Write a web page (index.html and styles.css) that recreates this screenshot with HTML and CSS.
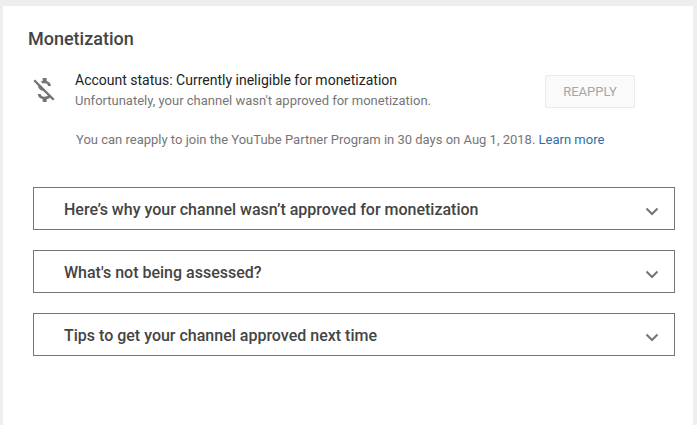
FILE: index.html
```html
<!DOCTYPE html>
<html lang="en">
<head>
  <meta charset="UTF-8" />
  <meta name="viewport" content="width=device-width, initial-scale=1.0" />
  <title>Monetization</title>
  <link rel="stylesheet" href="styles.css">
</head>
<body>
  <div class="card">
    <h2 class="title">Monetization</h2>
    <div class="status">
      <svg class="status-icon" viewBox="0 0 24 24" width="32" height="32">
        <path d="M12.5 6.9c1.78 0 2.44.85 2.5 2.1h2.21c-.07-1.72-1.12-3.3-3.21-3.81V3h-3v2.16c-.53.12-1.03.3-1.48.54l1.47 1.47c.41-.17.91-.27 1.51-.27zM5.33 4.06L4.06 5.33 7.5 8.77c0 2.08 1.56 3.21 3.91 3.91l3.51 3.51c-.34.48-1.05.91-2.42.91-2.06 0-2.87-.92-2.98-2.1h-2.2c.12 2.19 1.76 3.42 3.68 3.83V21h3v-2.15c.96-.18 1.82-.55 2.45-1.12l2.22 2.22 1.27-1.27L5.33 4.06z"/>
      </svg>
      <div class="status-text">
        <div class="status-main">Account status: Currently ineligible for monetization</div>
        <div class="status-sub">Unfortunately, your channel wasn't approved for monetization.</div>
      </div>
      <button class="reapply" disabled>REAPPLY</button>
    </div>
    <p class="note">You can reapply to join the YouTube Partner Program in 30 days on Aug 1, 2018. <a href="#">Learn more</a></p>
    <div class="panels">
      <div class="panel">
        <span>Here’s why your channel wasn’t approved for monetization</span>
        <svg class="chevron" viewBox="0 0 14 9" width="14" height="9"><path d="M1.5 1.5 7 7l5.5-5.5"/></svg>
      </div>
      <div class="panel">
        <span>What's not being assessed?</span>
        <svg class="chevron" viewBox="0 0 14 9" width="14" height="9"><path d="M1.5 1.5 7 7l5.5-5.5"/></svg>
      </div>
      <div class="panel">
        <span>Tips to get your channel approved next time</span>
        <svg class="chevron" viewBox="0 0 14 9" width="14" height="9"><path d="M1.5 1.5 7 7l5.5-5.5"/></svg>
      </div>
    </div>
  </div>
</body>
</html>
```

FILE: styles.css
```css
html, body {
  height: 100%;
}
body {
  margin: 0;
  padding: 6px 4px 0 3px;
  box-sizing: border-box;
  font-family: Roboto, sans-serif;
  background: #eeeeee;
  overflow: hidden;
}
.card {
  background: #fff;
  height: 100%;
  padding: 22px 18px 0 25px;
  box-sizing: border-box;
}
.title {
  margin: 0;
  font-size: 18px;
  line-height: 22px;
  font-weight: 500;
  color: #444;
}
.status {
  display: flex;
  align-items: flex-start;
  margin-top: 19px;
}
.status-icon {
  flex: none;
  margin-top: 5px;
  fill: #757575;
}
.status-text {
  flex: 1;
  margin: 1px 0 0 15px;
}
.status-main {
  font-size: 14px;
  line-height: 20px;
  color: #222;
}
.status-sub {
  font-size: 13px;
  line-height: 21px;
  color: #767676;
}
.reapply {
  flex: none;
  width: 90px;
  height: 33px;
  margin: 6px 40px 0 0;
  padding: 0;
  background: #fafafa;
  border: 1px solid #eaeaea;
  border-radius: 2px;
  font-family: inherit;
  font-size: 13px;
  color: #a6a6a6;
}
.note {
  margin: 19px 0 0 48px;
  font-size: 13px;
  line-height: 20px;
  color: #767676;
}
.note a {
  color: #2f6ea5;
  text-decoration: none;
}
.panels {
  display: flex;
  flex-direction: column;
  gap: 20px;
  margin: 37px 0 0 5px;
}
.panel {
  display: flex;
  align-items: center;
  justify-content: space-between;
  height: 43px;
  padding: 2px 15px 0 30px;
  box-sizing: border-box;
  border: 1px solid #757575;
  font-size: 16px;
  font-weight: 500;
  color: #444;
}
.chevron {
  flex: none;
  margin-top: 3px;
  fill: none;
  stroke: #757575;
  stroke-width: 2;
}
```
